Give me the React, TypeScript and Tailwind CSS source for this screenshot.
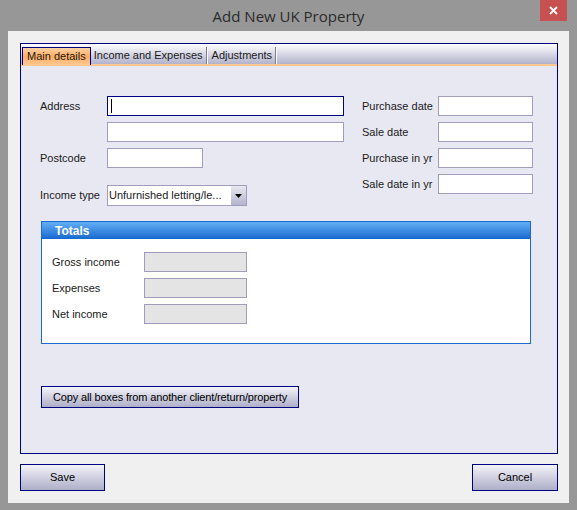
import React from 'react';

const font = "font-['Liberation_Sans',Arial,sans-serif]";

function TextBox({ w, focused, disabled }: { w: string; focused?: boolean; disabled?: boolean }) {
  return (
    <div
      className={`h-[20px] ${w} border flex items-center pl-[3px] ${
        focused ? 'border-[#000080] bg-white' : disabled ? 'border-[#a49cbc] bg-[#e4e4e4]' : 'border-[#a49cbc] bg-white'
      }`}
    >
      {focused && <div className="w-px h-[14px] bg-black" />}
    </div>
  );
}

function Btn({ children, w }: { children: React.ReactNode; w: string }) {
  return (
    <button
      type="button"
      className={`${w} border border-[#000080] bg-gradient-to-b from-[#f4f4fa] to-[#aeaec8] text-[11px] text-black flex items-center justify-center whitespace-nowrap`}
    >
      {children}
    </button>
  );
}

export default function App() {
  const right = ['Purchase date', 'Sale date', 'Purchase in yr', 'Sale date in yr'];
  const totals = ['Gross income', 'Expenses', 'Net income'];

  return (
    <div className={`w-[577px] h-[510px] bg-[#979797] flex flex-col ${font} text-[11px] text-[#1a1a1a]`}>
      {/* Title bar */}
      <div className="relative h-[31px] shrink-0 flex items-center justify-center">
        <span className="font-['Open_Sans',sans-serif] text-[15px] text-[#2b2b2b] pt-[1px]">Add New UK Property</span>
        <div className="absolute right-[10px] top-0 w-[27px] h-[21px] bg-[#c75050] flex items-center justify-center">
          <svg width="9" height="9" viewBox="0 0 9 9">
            <path d="M1 1 L8 8 M8 1 L1 8" stroke="white" strokeWidth="1.8" />
          </svg>
        </div>
      </div>

      {/* Client area */}
      <div className="ml-[8px] w-[561px] h-[472px] bg-[#f0f0f0] pt-[12px] pl-[12px] flex flex-col">
        {/* Tab control */}
        <div className="w-[538px] h-[411px] border border-[#000080] flex flex-col">
          <div className="h-[20px] shrink-0 bg-gradient-to-b from-white to-[#b2b2cc] flex items-end">
            <div className="ml-[1px] h-[18px] px-[4px] border border-b-0 border-[#000080] bg-gradient-to-b from-[#ffd2a4] via-[#ffad62] to-[#ffc890] flex items-center relative top-[1px]">
              Main details
            </div>
            <div className="h-[17px] px-[3px] flex items-center border-r border-r-[#7a7a90] shadow-[1px_0_0_#ffffff]">
              Income and Expenses
            </div>
            <div className="h-[17px] px-[3px] ml-[2px] flex items-center border-r border-r-[#7a7a90] shadow-[1px_0_0_#ffffff]">
              Adjustments
            </div>
          </div>
          <div className="h-[2px] shrink-0 bg-[#ffc890]" />

          <div className="flex-1 bg-[#e8e8f2] pl-[19px] pt-[30px] flex flex-col">
            <div className="flex">
              {/* Left column */}
              <div className="w-[320px] flex flex-col">
                <div className="flex items-center h-[20px]">
                  <span className="w-[67px]">Address</span>
                  <TextBox w="w-[237px]" focused />
                </div>
                <div className="flex items-center h-[20px] mt-[6px]">
                  <span className="w-[67px]" />
                  <TextBox w="w-[237px]" />
                </div>
                <div className="flex items-center h-[20px] mt-[6px]">
                  <span className="w-[67px]">Postcode</span>
                  <TextBox w="w-[96px]" />
                </div>
                <div className="flex items-center h-[21px] mt-[17px]">
                  <span className="w-[67px] whitespace-nowrap">Income type</span>
                  <div className="w-[140px] h-[21px] border border-[#a49cbc] bg-white flex">
                    <span className="flex-1 pl-[1px] flex items-center whitespace-nowrap overflow-hidden">
                      Unfurnished letting/le...
                    </span>
                    <div className="w-[15px] bg-gradient-to-b from-[#e8e8f0] to-[#b4b4cc] flex items-center justify-center">
                      <svg width="7" height="4" viewBox="0 0 7 4">
                        <path d="M0 0 H7 L3.5 4 Z" fill="#000" />
                      </svg>
                    </div>
                  </div>
                </div>
              </div>
              {/* Right column */}
              <div className="ml-[2px] flex flex-col gap-[6px]">
                {right.map((l) => (
                  <div key={l} className="flex items-center h-[20px]">
                    <span className="w-[76px] whitespace-nowrap">{l}</span>
                    <TextBox w="w-[95px]" />
                  </div>
                ))}
              </div>
            </div>

            {/* Totals */}
            <div className="ml-[1px] mt-[15px] w-[490px] h-[123px] border border-[#1a6ad0] bg-white flex flex-col">
              <div className="h-[17px] shrink-0 bg-gradient-to-b from-[#62aef5] to-[#1569cf] flex items-center pl-[13px]">
                <span className="text-white font-bold text-[12px]">Totals</span>
              </div>
              <div className="pl-[10px] pt-[13px] flex flex-col gap-[6px]">
                {totals.map((l) => (
                  <div key={l} className="flex items-center h-[20px]">
                    <span className="w-[92px]">{l}</span>
                    <TextBox w="w-[103px]" disabled />
                  </div>
                ))}
              </div>
            </div>

            <div className="ml-[1px] mt-[42px] flex">
              <Btn w="w-[258px] h-[22px] tracking-[-0.15px]">Copy all boxes from another client/return/property</Btn>
            </div>
          </div>
        </div>

        {/* Footer buttons */}
        <div className="mt-[10px] w-[538px] flex justify-between">
          <Btn w="w-[85px] h-[27px]">Save</Btn>
          <Btn w="w-[86px] h-[27px]">Cancel</Btn>
        </div>
      </div>
    </div>
  );
}
